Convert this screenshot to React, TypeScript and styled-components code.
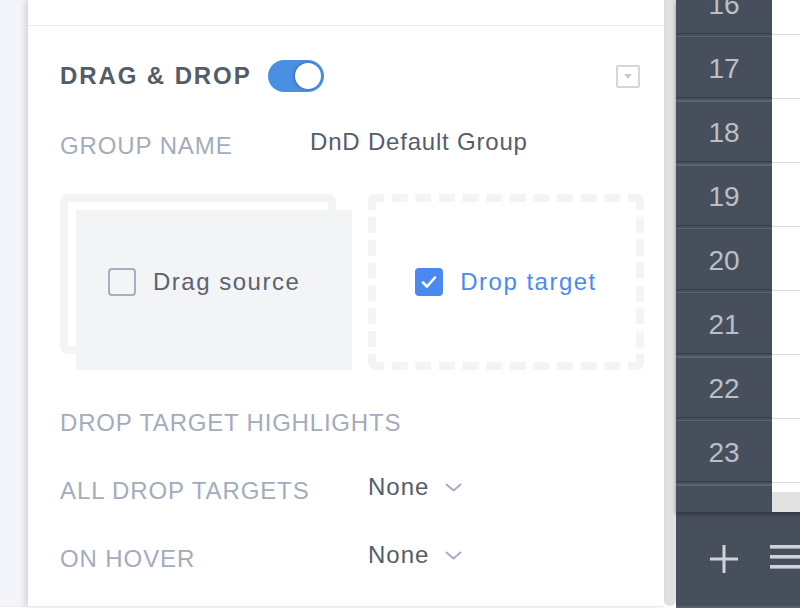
import React from "react"
import styled, { createGlobalStyle } from "styled-components"

const GlobalStyle = createGlobalStyle`
  html, body {
    margin: 0;
    padding: 0;
    background: #ffffff;
  }
  body {
    font-family: "Liberation Sans", Arial, sans-serif;
  }
`

const rows = [16, 17, 18, 19, 20, 21, 22, 23, 24]

const CheckIcon = () => (
  <svg width="28" height="28" viewBox="0 0 28 28">
    <path d="M8 14.5l4 4 8-9" fill="none" stroke="#fff" strokeWidth="2.6" strokeLinecap="round" strokeLinejoin="round" />
  </svg>
)

const Chevron = () => (
  <svg width="17" height="9" viewBox="0 0 17 9">
    <path d="M1.5 1.5l7 6 7-6" fill="none" stroke="#a6afbf" strokeWidth="2" strokeLinecap="round" strokeLinejoin="round" />
  </svg>
)

const PlusIcon = () => (
  <svg width="28" height="28" viewBox="0 0 28 28">
    <path d="M14 0v28M0 14h28" stroke="#d0d4d9" strokeWidth="3" />
  </svg>
)

const MenuIcon = () => (
  <svg width="36" height="26" viewBox="0 0 36 26">
    <rect x="0" y="0" width="36" height="3.6" fill="#d0d4d9" />
    <rect x="0" y="10" width="36" height="3.6" fill="#d0d4d9" />
    <rect x="0" y="20" width="36" height="3.6" fill="#d0d4d9" />
  </svg>
)

const App = () => {
  return (
    <>
      <GlobalStyle />
      <Screen>
        <Gutter />
        <Panel>
          <PrevSection />
          <Section>
            <HeaderRow>
              <Title>Drag &amp; Drop</Title>
              <Switch>
                <Knob />
              </Switch>
              <CollapseButton>
                <Triangle />
              </CollapseButton>
            </HeaderRow>

            <FieldRow $labelWidth={250}>
              <Label>Group name</Label>
              <Value $spacing={0.8}>DnD Default Group</Value>
            </FieldRow>

            <Cards>
              <DragSlot>
                <DragPreview>
                  <Box />
                  <CardText>Drag source</CardText>
                </DragPreview>
              </DragSlot>
              <DropTarget>
                <Box $checked>
                  <CheckIcon />
                </Box>
                <CardText $active>Drop target</CardText>
              </DropTarget>
            </Cards>

            <SubHeading>Drop target highlights</SubHeading>

            <FieldRow $labelWidth={308} $gap={36}>
              <Label>All drop targets</Label>
              <Select>
                <Value>None</Value>
                <Chevron />
              </Select>
            </FieldRow>
            <FieldRow $labelWidth={308} $gap={36}>
              <Label>On hover</Label>
              <Select>
                <Value>None</Value>
                <Chevron />
              </Select>
            </FieldRow>
          </Section>
        </Panel>
        <ScrollTrack />
        <Sheet>
          <SheetBody>
            <RowHeaders>
              <RowList>
                {rows.map((n) => (
                  <RowHeader key={n}>{n === 24 ? "" : n}</RowHeader>
                ))}
              </RowList>
            </RowHeaders>
            <CellColumn>
              <CellList>
                {rows.map((n) => (
                  <Cell key={n} />
                ))}
              </CellList>
              <HScroll />
            </CellColumn>
          </SheetBody>
          <Toolbar>
            <PlusIcon />
            <MenuSlot>
              <MenuIcon />
            </MenuSlot>
          </Toolbar>
        </Sheet>
      </Screen>
    </>
  )
}

export default App

const Screen = styled.div`
  display: flex;
  width: 800px;
  height: 608px;
  overflow: hidden;
  background: #ffffff;
`

const Gutter = styled.div`
  width: 28px;
  flex: none;
  height: 606px;
  background: #f3f5fa;
  border-bottom: 1px solid #ececef;
`

const Panel = styled.div`
  width: 636px;
  flex: none;
  height: 606px;
  background: #ffffff;
  box-shadow: -3px 0 6px rgba(40, 50, 70, 0.16);
  border-bottom: 1px solid #ececef;
  position: relative;
  z-index: 1;
  display: flex;
  flex-direction: column;
`

const PrevSection = styled.div`
  height: 25px;
  border-bottom: 1px solid #e9e9ec;
`

const Section = styled.div`
  padding: 34px 20px 0 32px;
  display: flex;
  flex-direction: column;
`

const HeaderRow = styled.div`
  display: flex;
  align-items: center;
  height: 32px;
  padding-right: 4px;
`

const Title = styled.h2`
  margin: 0 16px 0 0;
  font-size: 24px;
  line-height: 28px;
  font-weight: 700;
  letter-spacing: 1.9px;
  text-transform: uppercase;
  color: #535c69;
`

const Switch = styled.div`
  width: 56px;
  height: 32px;
  border-radius: 16px;
  background: #4a90e2;
  display: flex;
  align-items: center;
  justify-content: flex-end;
  padding-right: 3px;
  box-sizing: border-box;
`

const Knob = styled.div`
  width: 26px;
  height: 26px;
  border-radius: 50%;
  background: #ffffff;
  box-shadow: -1px 0 3px rgba(20, 40, 90, 0.45);
`

const CollapseButton = styled.div`
  margin-left: auto;
  width: 24px;
  height: 23px;
  box-sizing: border-box;
  border: 2px solid #d3d8df;
  border-radius: 2px;
  display: flex;
  align-items: center;
  justify-content: center;
`

const Triangle = styled.div`
  width: 0;
  height: 0;
  border-left: 4px solid transparent;
  border-right: 4px solid transparent;
  border-top: 5px solid #c4cad3;
  margin-top: 1px;
`

const FieldRow = styled.div<{ $labelWidth: number; $gap?: number }>`
  display: grid;
  grid-template-columns: ${(p) => p.$labelWidth}px auto;
  align-items: start;
  margin-top: ${(p) => p.$gap ?? 36}px;
  height: 32px;
`

const Label = styled.div`
  padding-top: 4px;
  font-size: 24px;
  line-height: 28px;
  letter-spacing: 0.9px;
  text-transform: uppercase;
  color: #a3acbd;
  white-space: nowrap;
`

const Value = styled.div<{ $spacing?: number }>`
  font-size: 24px;
  line-height: 28px;
  letter-spacing: ${(p) => p.$spacing ?? 1}px;
  color: #555d6a;
  white-space: nowrap;
`

const Select = styled.div`
  display: flex;
  align-items: center;
  gap: 16px;
`

const Cards = styled.div`
  display: grid;
  grid-template-columns: 276px 276px;
  gap: 32px;
  margin-top: 34px;
  height: 176px;
`

const DragSlot = styled.div`
  position: relative;

  &::before {
    content: "";
    position: absolute;
    left: 0;
    top: 0;
    width: 276px;
    height: 160px;
    box-sizing: border-box;
    border: 8px solid #f3f4f6;
    border-radius: 8px;
  }
`

const DragPreview = styled.div`
  position: relative;
  margin: 16px 0 0 16px;
  width: 276px;
  height: 160px;
  box-sizing: border-box;
  padding: 0 0 16px 32px;
  background: #f3f4f6;
  display: flex;
  align-items: center;
  gap: 17px;
`

const DropTarget = styled.div`
  box-sizing: border-box;
  border: 8px dashed #f3f4f6;
  border-radius: 8px;
  display: flex;
  align-items: center;
  justify-content: center;
  gap: 17px;
`

const Box = styled.div<{ $checked?: boolean }>`
  width: 28px;
  height: 28px;
  box-sizing: border-box;
  border-radius: 4px;
  border: ${(p) => (p.$checked ? "none" : "2px solid #a7b0bf")};
  background: ${(p) => (p.$checked ? "#4a8af0" : "transparent")};
  display: flex;
  flex: none;
`

const CardText = styled.span<{ $active?: boolean }>`
  font-size: 24px;
  line-height: 28px;
  letter-spacing: 1.5px;
  color: ${(p) => (p.$active ? "#4a8af0" : "#5b626e")};
  white-space: nowrap;
`

const SubHeading = styled.div`
  margin-top: 39px;
  font-size: 24px;
  line-height: 28px;
  letter-spacing: 0.8px;
  text-transform: uppercase;
  color: #a3acbd;
`

const ScrollTrack = styled.div`
  width: 12px;
  flex: none;
  height: 606px;
  background: #e1e1e1;
  border-radius: 0 0 6px 6px;
`

const Sheet = styled.div`
  flex: 1;
  display: flex;
  flex-direction: column;
  background: #464f5b;
`

const SheetBody = styled.div`
  display: flex;
  height: 512px;
  flex: none;
  position: relative;
  z-index: 1;
  box-shadow: 0 2px 4px rgba(0, 0, 0, 0.35);
`

const RowHeaders = styled.div`
  width: 96px;
  flex: none;
  overflow: hidden;
  background: #464f5b;
`

const RowList = styled.div`
  margin-top: -30px;
`

const RowHeader = styled.div`
  height: 64px;
  box-sizing: border-box;
  border-bottom: 1px solid #363d46;
  background: linear-gradient(to bottom, #464f5b 0 2px, #5b636e 2px 3.5px, #464f5b 3.5px);
  display: flex;
  align-items: center;
  justify-content: center;
  padding-top: 6px;
  font-size: 28px;
  color: #b9c0c8;
`

const CellColumn = styled.div`
  flex: 1;
  display: flex;
  flex-direction: column;
  background: #ffffff;
  overflow: hidden;
`

const CellList = styled.div`
  flex: 1;
  overflow: hidden;
  margin-top: -29px;
`

const Cell = styled.div`
  height: 64px;
  box-sizing: border-box;
  border-bottom: 1px solid #dcdcdc;
`

const HScroll = styled.div`
  height: 20px;
  flex: none;
  background: #e1e1e1;
`

const Toolbar = styled.div`
  flex: 1;
  display: flex;
  align-items: center;
  padding: 0 0 0 34px;
  gap: 32px;
  border-bottom: 2px solid #59616c;
`

const MenuSlot = styled.div`
  display: flex;
  margin-top: -2px;
`
